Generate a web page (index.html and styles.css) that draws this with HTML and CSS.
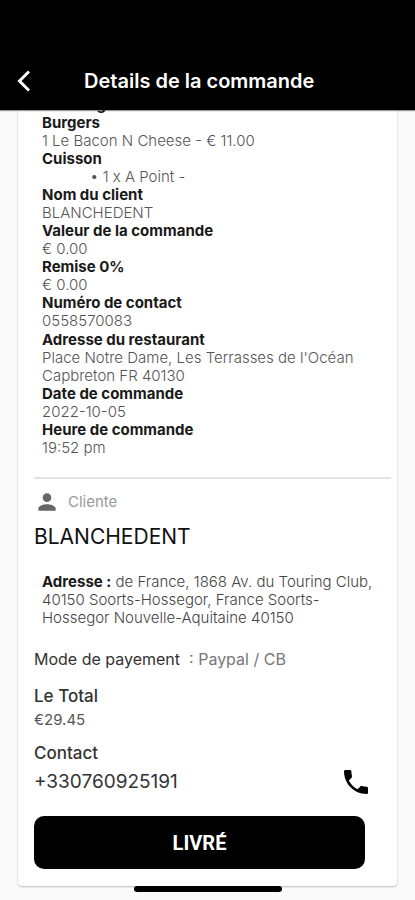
FILE: index.html
```html
<!DOCTYPE html>
<html lang="fr">
<head>
<meta charset="utf-8">
<meta name="viewport" content="width=device-width, initial-scale=1">
<title>Details de la commande</title>
<link rel="stylesheet" href="styles.css">
</head>
<body>
<header class="topbar">
  <button class="back" type="button" aria-label="Retour">
    <svg width="14" height="22" viewBox="0 0 14 22"><path d="M13 1.500 3.500 11l9.500 9.500" fill="none" stroke="currentColor" stroke-width="3"/></svg>
  </button>
  <h1 class="title">Details de la commande</h1>
</header>
<main class="page">
  <article class="card">
    <div class="details">
      <dl>
        <dt>Les Burgers</dt>
        <dt>Burgers</dt>
        <dd>1 Le Bacon N Cheese - € 11.00</dd>
        <dt>Cuisson</dt>
        <dd class="option">• 1 x A Point -</dd>
        <dt>Nom du client</dt>
        <dd>BLANCHEDENT</dd>
        <dt>Valeur de la commande</dt>
        <dd>€ 0.00</dd>
        <dt>Remise 0%</dt>
        <dd>€ 0.00</dd>
        <dt>Numéro de contact</dt>
        <dd>0558570083</dd>
      </dl>
      <dl>
        <dt>Adresse du restaurant</dt>
        <dd>Place Notre Dame, Les Terrasses de l'Océan Capbreton FR 40130</dd>
        <dt>Date de commande</dt>
        <dd>2022-10-05</dd>
        <dt>Heure de commande</dt>
        <dd>19:52 pm</dd>
      </dl>
    </div>
    <hr class="rule">
    <section class="client">
      <div class="role">
        <svg width="26" height="26" viewBox="0 0 24 24" fill="currentColor" aria-hidden="true"><path d="M12 12c2.210 0 4-1.790 4-4s-1.790-4-4-4-4 1.790-4 4 1.790 4 4 4zm0 2c-2.670 0-8 1.340-8 4v2h16v-2c0-2.660-5.330-4-8-4z"/></svg>
        <span>Cliente</span>
      </div>
      <h2 class="name">BLANCHEDENT</h2>
      <p class="address"><strong>Adresse :</strong> de France, 1868 Av. du Touring Club, 40150 Soorts-Hossegor, France Soorts-Hossegor Nouvelle-Aquitaine 40150</p>
      <p class="payment">Mode de payement <span class="method">&nbsp;: Paypal / CB</span></p>
      <h3 class="label">Le Total</h3>
      <p class="amount">€29.45</p>
      <h3 class="label">Contact</h3>
      <div class="contact">
        <span>+330760925191</span>
        <a class="call" href="tel:+330760925191" aria-label="Appeler">
          <svg width="32" height="32" viewBox="0 0 24 24" fill="currentColor"><path d="M7.500 3H4c-.55 0-1 .45-1 1 0 9.390 7.610 17 17 17 .55 0 1-.45 1-1v-3.490c0-.55-.45-1-1-1-1.240 0-2.450-.2-3.570-.57a.84.84 0 0 0-.31-.05c-.26 0-.51.1-.71.29l-2.200 2.200a15.150 15.150 0 0 1-6.590-6.590l2.200-2.200c.28-.28.36-.67.25-1.020A11.360 11.360 0 0 1 8.500 4c0-.55-.45-1-1-1z"/></svg>
        </a>
      </div>
      <button class="deliver" type="button">LIVRÉ</button>
    </section>
  </article>
</main>
<div class="home-indicator"></div>
</body>
</html>
```
FILE: styles.css
```css
* {
  box-sizing: border-box;
}

body,
h1,
h2,
h3,
p,
dl,
dd {
  margin: 0;
}

body {
  background: #fafafa;
  color: #333;
  font-family: Inter, Roboto, sans-serif;
  font-size: 15px;
  line-height: 18px;
}

.topbar {
  position: sticky;
  top: 0;
  z-index: 1;
  display: flex;
  align-items: center;
  gap: 54px;
  height: 110px;
  padding: 52px 16px 0;
  background: #000;
  color: #fff;
  box-shadow: 0 1px 1px rgba(0, 0, 0, 0.4);
}

.back {
  display: flex;
  padding: 0;
  border: 0;
  background: none;
  color: inherit;
}

.title {
  font-size: 20px;
  font-weight: 600;
  line-height: 24px;
}

.page {
  padding: 0 18px 14px;
}

.card {
  margin-top: -14px;
  padding: 0 6px 17px 16px;
  border-radius: 4px;
  background: #fff;
  box-shadow: 0 1px 2px rgba(0, 0, 0, 0.25);
}

.details {
  display: grid;
  gap: 1px;
  padding: 0 8px 20px;
}

.details dt {
  color: #1a1a1a;
  font-weight: 700;
}

.details dd {
  color: #555;
  font-weight: 300;
}

.details .option {
  padding-left: 48px;
}

.rule {
  height: 2px;
  margin: 0;
  border: 0;
  background: #e2e2e2;
}

.client {
  padding-right: 26px;
}

.role {
  display: flex;
  align-items: center;
  gap: 8px;
  margin-top: 10px;
  color: #999;
}

.role svg {
  color: #666;
}

.name {
  margin-top: 8px;
  color: #111;
  font-size: 21px;
  font-weight: 400;
  line-height: 28px;
}

.address {
  margin: 22px -20px 0 8px;
  color: #444;
  font-weight: 300;
}

.address strong {
  color: #1a1a1a;
  font-weight: 700;
}

.payment {
  margin-top: 23px;
  font-size: 16px;
}

.method {
  color: #777;
}

.label {
  margin-top: 17px;
  font-size: 17px;
  font-weight: 500;
  line-height: 22px;
}

.amount {
  margin-top: 4px;
  color: #555;
}

.amount + .label {
  margin-top: 13px;
}

.contact {
  display: flex;
  align-items: center;
  justify-content: space-between;
  margin-top: 2px;
  font-size: 19px;
  line-height: 32px;
}

.call {
  display: flex;
  margin-right: -7px;
  color: #000;
}

.deliver {
  display: block;
  width: 100%;
  height: 53px;
  margin-top: 18px;
  border: 0;
  border-radius: 10px;
  background: #000;
  color: #fff;
  font-family: Roboto, sans-serif;
  font-size: 20px;
  font-weight: 700;
}

.home-indicator {
  position: fixed;
  bottom: 8px;
  left: 50%;
  width: 148px;
  height: 6px;
  margin-left: -74px;
  border-radius: 3px;
  background: #000;
}
```
